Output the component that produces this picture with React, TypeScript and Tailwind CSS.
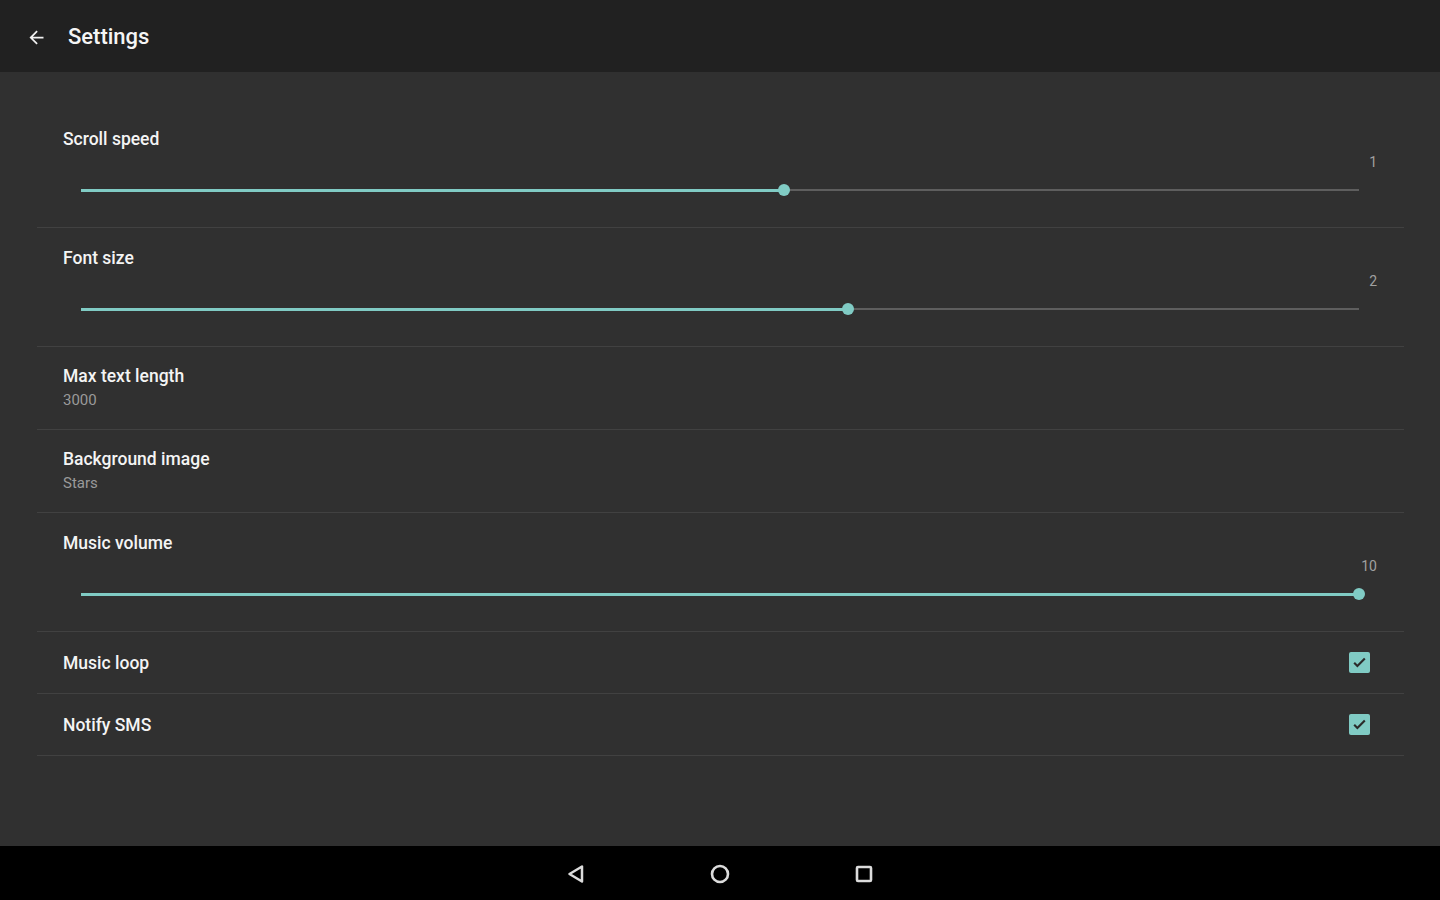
import React from "react";

type SliderPref = { kind: "slider"; title: string; value: string; fill: number };
type TextPref = { kind: "text"; title: string; summary: string };
type CheckPref = { kind: "check"; title: string; checked: boolean };
type Pref = SliderPref | TextPref | CheckPref;

const prefs: Pref[] = [
  { kind: "slider", title: "Scroll speed", value: "1", fill: 55 },
  { kind: "slider", title: "Font size", value: "2", fill: 60 },
  { kind: "text", title: "Max text length", summary: "3000" },
  { kind: "text", title: "Background image", summary: "Stars" },
  { kind: "slider", title: "Music volume", value: "10", fill: 100 },
  { kind: "check", title: "Music loop", checked: true },
  { kind: "check", title: "Notify SMS", checked: true },
];

const Slider = ({ value, fill }: { value: string; fill: number }) => {
  return (
    <div className="flex flex-col">
      <div className="flex justify-end h-5 mt-[3px] pr-[27px] text-sm leading-5 text-[#a0a0a0]">
        <span>{value}</span>
      </div>
      <div className="relative h-3 mt-3 ml-[44px] mr-[45px] flex items-center">
        <div className="absolute left-0 right-0 h-[2px] bg-[#5e5e5e]" />
        <div className="absolute left-0 h-[3px] bg-[#80cbc4]" style={{ width: `${fill}%` }} />
        <div
          className="absolute w-3 h-3 -ml-1.5 rounded-full bg-[#80cbc4]"
          style={{ left: `${fill}%` }}
        />
      </div>
    </div>
  );
};

const Checkbox = ({ checked }: { checked: boolean }) => (
  <div className="w-[21px] h-[21px] mr-[34px] rounded-[2px] bg-[#80cbc4] flex items-center justify-center">
    {checked && (
      <svg width="17" height="17" viewBox="0 0 24 24">
        <path d="M4.5 12.5l4.5 4.5L19.5 6.5" fill="none" stroke="#2a2a2a" strokeWidth="3" />
      </svg>
    )}
  </div>
);

const PrefRow = ({ pref }: { pref: Pref }) => {
  if (pref.kind === "slider") {
    return (
      <div className="pt-5 pb-[31px] border-b border-[#414141]">
        <div className="pl-[26px] text-[17.5px] font-medium leading-5 text-[#f4f4f4]">{pref.title}</div>
        <Slider value={pref.value} fill={pref.fill} />
      </div>
    );
  }
  if (pref.kind === "text") {
    return (
      <div className="pt-[19px] pb-[19px] pl-[26px] border-b border-[#414141]">
        <div className="text-[17.5px] font-medium leading-5 text-[#f4f4f4]">{pref.title}</div>
        <div className="mt-1 text-[15px] leading-5 text-[#9a9a9a]">{pref.summary}</div>
      </div>
    );
  }
  return (
    <div className="h-[62px] pl-[26px] flex items-center justify-between border-b border-[#414141]">
      <div className="text-[17.5px] font-medium leading-5 text-[#f4f4f4]">{pref.title}</div>
      <Checkbox checked={pref.checked} />
    </div>
  );
};

const App = () => {
  return (
    <div
      className="w-[1440px] h-[900px] flex flex-col bg-[#303030] overflow-hidden"
      style={{ fontFamily: "Roboto, 'Noto Sans', sans-serif" }}
    >
      <header className="h-[72px] shrink-0 bg-[#212121] flex items-center pl-[26px] pt-[3px] gap-[21px]">
        <svg width="21" height="21" viewBox="0 0 24 24" className="text-[#f0f0f0]">
          <path d="M20 11H7.83l5.59-5.59L12 4l-8 8 8 8 1.41-1.41L7.83 13H20v-2z" fill="currentColor" />
        </svg>
        <h1 className="text-[22px] font-medium text-[#f5f5f5] -mt-[2px]">Settings</h1>
      </header>

      <main className="flex-1 pt-[37px] pl-[37px] pr-9">
        {prefs.map((p) => (
          <PrefRow key={p.title} pref={p} />
        ))}
      </main>

      <nav className="h-[54px] shrink-0 bg-black flex items-center justify-center gap-[120px] pt-[2px]">
        <svg width="24" height="24" viewBox="0 0 24 24">
          <path d="M18 4.5v15L5.5 12z" fill="none" stroke="#dcdcdc" strokeWidth="2.5" strokeLinejoin="round" />
        </svg>
        <svg width="24" height="24" viewBox="0 0 24 24">
          <circle cx="12" cy="12" r="8" fill="none" stroke="#dcdcdc" strokeWidth="2.6" />
        </svg>
        <svg width="24" height="24" viewBox="0 0 24 24">
          <rect x="5" y="5" width="14" height="14" rx="1" fill="none" stroke="#dcdcdc" strokeWidth="2.6" />
        </svg>
      </nav>
    </div>
  );
};

export default App;
